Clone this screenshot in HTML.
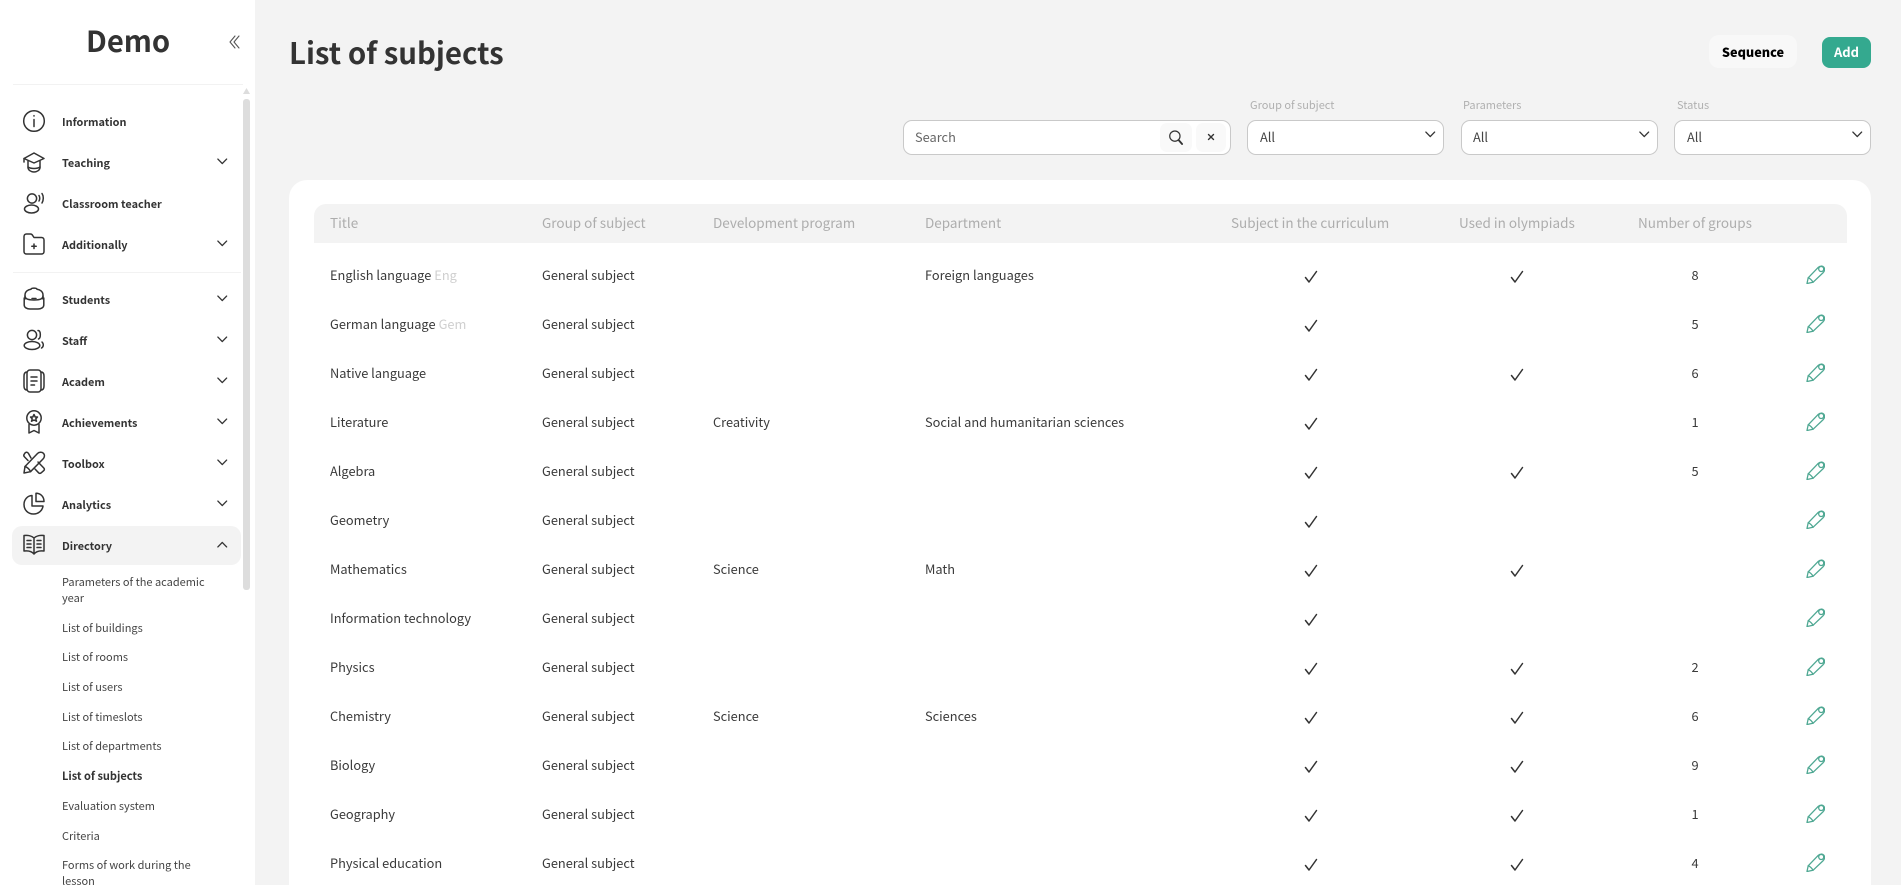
<!DOCTYPE html>
<html lang="en"><head><meta charset="utf-8"><title>List of subjects</title>
<style>
html,body{margin:0;padding:0;width:1901px;height:885px;overflow:hidden;background:#f3f3f3}
body{position:relative;font-family:"Noto Sans CJK JP","Liberation Sans",sans-serif;color:#333}
.t{position:absolute;white-space:nowrap;line-height:20px;height:20px}
.box{position:absolute;box-sizing:border-box}
svg{position:absolute;fill:none;stroke:#333;stroke-width:1.5;stroke-linecap:round;stroke-linejoin:round;overflow:visible}
.nav{font-size:10.9px;font-weight:700;left:62px;color:#333}
.sub{font-size:11px;left:62px;color:#444}
.lab{font-size:11px;color:#b0b0b0}
.sel{background:#fff;border:1px solid #c9c9c9;border-radius:9px;top:120px;height:35px}
.val{font-size:12.8px;top:127px;color:#444}
.h{font-size:13.5px;top:212px;color:#adadad}
.r{position:absolute;left:0;width:1901px;height:20px}
.r .t{top:0;font-size:12.8px;color:#3a3a3a}
.a{left:330px}.b{left:542px}.c{left:713px}.d{left:925px}.n{left:1675px;width:40px;text-align:center}
.k1{left:1304px;top:5px;width:14px;height:14px}
.k2{left:1510px;top:5px;width:14px;height:14px}
.r svg.p{left:1806px;top:0;width:19px;height:19px;stroke:#4fa893;stroke-width:1.3}
.g{color:#cfcfcf;margin-left:3px}
.ch{width:10.5px;height:7px}
</style></head><body>
<svg width="0" height="0" style="position:absolute"><defs>
<symbol id="ck" viewBox="0 0 14 14"><path d="M1.5 7.5L5 12L12.5 1.5"/></symbol>
<symbol id="pn" viewBox="0 0 19 19"><path d="M1 18.5L2.2 12.8L12.3 2.3C14 .7 16.6 .7 17.8 2.2C19 3.6 18.8 6 17.2 7.6L7 17.3Z"/><path d="M2.2 12.8C4 13.4 6.2 15.4 7 17.3"/><circle cx="15.2" cy="4" r="2.5"/></symbol>
<symbol id="dn" viewBox="0 0 12 8"><path d="M1 1.2L6 6.4L11 1.2"/></symbol>
</defs></svg>

<div class="box" style="left:0;top:0;width:255px;height:885px;background:#fff"></div>
<div class="t" style="left:86px;top:20px;height:40px;line-height:40px;font-size:29.2px;font-weight:700;color:#333">Demo</div>
<svg style="left:229px;top:35px;width:11px;height:14px;stroke:#555;stroke-width:1.1" viewBox="0 0 11 14"><path d="M6 1L1 7L6 13M10 1L5 7L10 13"/></svg>
<div class="box" style="left:13px;top:84px;width:230px;height:1px;background:#f2f2f2"></div>
<div class="box" style="left:13px;top:272px;width:228px;height:1px;background:#f2f2f2"></div>
<svg style="left:243px;top:88px;width:7px;height:6px;stroke:none;fill:#ddd" viewBox="0 0 7 6"><path d="M3.5 0L7 6H0Z"/></svg>
<div class="box" style="left:243px;top:99px;width:7px;height:491px;background:#ddd;border-radius:3px"></div>
<div class="box" style="left:12px;top:526px;width:229px;height:39px;background:#f3f3f3;border-radius:10px"></div>

<svg style="left:23px;top:110px;width:22px;height:22px" viewBox="0 0 22 22"><circle cx="11" cy="11" r="10.3"/><path d="M11 9.5V16.5M11 5.6V6"/></svg>
<div class="t nav" style="top:112px">Information</div>
<svg style="left:23px;top:152px;width:22px;height:21px" viewBox="0 0 22 21"><path d="M11 1L21 6.5L11 11L1 6.5Z"/><path d="M1 6.5V10M5 9V15.5C5 18 8 20 11 20C14 20 17 18 17 15.5V9"/><path d="M5 15C8 17 14 17 17 15"/></svg>
<div class="t nav" style="top:153px">Teaching</div>
<svg class="ch" style="left:217px;top:158px"><use href="#dn"/></svg>
<svg style="left:24px;top:192px;width:21px;height:22px" viewBox="0 0 21 22"><circle cx="8" cy="6.5" r="4.6"/><ellipse cx="7.5" cy="17" rx="7" ry="4"/><path d="M15 3.5C16 5 16 7.5 15 9M18 1.5C19.7 4 19.7 8 18 11"/></svg>
<div class="t nav" style="top:194px">Classroom teacher</div>
<svg style="left:23px;top:233px;width:22px;height:22px" viewBox="0 0 22 22"><path d="M1 3.5C1 2 2 1 3.5 1H7.5C9 1 9.5 2 10 3L11 4.5H18.5C20 4.5 21 5.5 21 7V18.5C21 20 20 21 18.5 21H3.5C2 21 1 20 1 18.5Z"/><path d="M11 11V15.5M8.8 13.2H13.2"/></svg>
<div class="t nav" style="top:235px">Additionally</div>
<svg class="ch" style="left:217px;top:240px"><use href="#dn"/></svg>

<svg style="left:23px;top:287px;width:22px;height:23px" viewBox="0 0 22 23"><path d="M2 12V8C2 4.5 5 2.5 8 2.2C8.5 0.8 13.5 0.8 14 2.2C17 2.5 20 4.5 20 8V12"/><path d="M2 9C2 12 6 13 11 13C16 13 20 12 20 9"/><path d="M1.2 11V18C1.2 20.5 4 22 7 22H15C18 22 20.8 20.5 20.8 18V11"/><path d="M9 11.5H13"/></svg>
<div class="t nav" style="top:290px">Students</div>
<svg class="ch" style="left:217px;top:295px"><use href="#dn"/></svg>
<svg style="left:23px;top:329px;width:22px;height:22px" viewBox="0 0 22 22"><circle cx="9" cy="6" r="4.6"/><ellipse cx="9" cy="16.5" rx="7.8" ry="4"/><path d="M15 1.5C18 1.5 18 9 15.5 10M19 13C21 15 20.5 18 18.5 19"/></svg>
<div class="t nav" style="top:331px">Staff</div>
<svg class="ch" style="left:217px;top:336px"><use href="#dn"/></svg>
<svg style="left:23px;top:369px;width:22px;height:24px" viewBox="0 0 22 24"><rect x="4" y="1" width="14" height="22" rx="3"/><path d="M4 3C1.5 3 1 5 1 7V17C1 19 1.5 21 4 21M18 3C20.5 3 21 5 21 7V17C21 19 20.5 21 18 21"/><path d="M8 8H14M8 12H14M8 16H11.5"/></svg>
<div class="t nav" style="top:372px">Academ</div>
<svg class="ch" style="left:217px;top:377px"><use href="#dn"/></svg>
<svg style="left:25px;top:410px;width:18px;height:24px" viewBox="0 0 18 24"><circle cx="9" cy="8" r="7.2"/><path d="M9 4.5L10.2 7H12.5L10.8 8.8L11.5 11.2L9 10L6.5 11.2L7.2 8.8L5.5 7H7.8Z"/><path d="M4 14.5V23L9 20.5L14 23V14.5"/></svg>
<div class="t nav" style="top:413px">Achievements</div>
<svg class="ch" style="left:217px;top:418px"><use href="#dn"/></svg>
<svg style="left:23px;top:451px;width:22px;height:23px" viewBox="0 0 22 23"><path d="M1 22L2 15.5L14.5 2.5C16 1 18.8.8 20.3 2.2C22 3.8 21.7 6.3 20 8L7.5 20.7Z"/><path d="M2 15.5C4 16 6.8 18.5 7.5 20.7"/><path d="M8 7L5.5 2.5C4.5 1 3 1 2.2 1.8L1.2 3.2C.6 4 .8 5.2 1.6 6L5 9.5M15 11L20.8 17C21.6 17.8 21.6 18.8 20.8 19.6L18.2 21.8C17.4 22.5 16.3 22.5 15.5 21.7L12 18"/></svg>
<div class="t nav" style="top:454px">Toolbox</div>
<svg class="ch" style="left:217px;top:459px"><use href="#dn"/></svg>
<svg style="left:23px;top:492px;width:22px;height:23px" viewBox="0 0 22 23"><path d="M9 3.5C4.5 3.7 1 7.5 1 12.5C1 18 5 22 10.5 22C15.5 22 19.5 18.5 20 14H9Z"/><path d="M13 1.2C17.5 1.2 21 4.5 21 9.5H13Z"/></svg>
<div class="t nav" style="top:495px">Analytics</div>
<svg class="ch" style="left:217px;top:500px"><use href="#dn"/></svg>
<svg style="left:23px;top:534px;width:22px;height:21px" viewBox="0 0 22 21"><path d="M11 4C9 2 5 1 1 1.5V17C5 16.5 9 17.5 11 20C13 17.5 17 16.5 21 17V1.5C17 1 13 2 11 4V20"/><path d="M4 6.5H8M4 10H8M4 13.5H8M14 6.5H18M14 10H18M14 13.5H18"/></svg>
<div class="t nav" style="top:536px">Directory</div>
<svg class="ch" style="left:217px;top:541px;transform:scaleY(-1)"><use href="#dn"/></svg>

<div class="t sub" style="top:572px">Parameters of the academic</div>
<div class="t sub" style="top:588px">year</div>
<div class="t sub" style="top:618px">List of buildings</div>
<div class="t sub" style="top:647px">List of rooms</div>
<div class="t sub" style="top:677px">List of users</div>
<div class="t sub" style="top:707px">List of timeslots</div>
<div class="t sub" style="top:736px">List of departments</div>
<div class="t sub" style="top:766px;font-weight:700;color:#333">List of subjects</div>
<div class="t sub" style="top:796px">Evaluation system</div>
<div class="t sub" style="top:826px">Criteria</div>
<div class="t sub" style="top:855px">Forms of work during the</div>
<div class="t sub" style="top:871px">lesson</div>

<div class="t" style="left:289px;top:32px;height:40px;line-height:40px;font-size:29.4px;font-weight:700;color:#333">List of subjects</div>
<div class="box" style="left:1709px;top:35px;width:88px;height:33px;background:#f8f8f8;border-radius:10px"></div>
<div class="t" style="left:1709px;top:42px;width:88px;text-align:center;font-size:12.7px;font-weight:900;color:#000">Sequence</div>
<div class="box" style="left:1822px;top:37px;width:49px;height:31px;background:#34a98f;border-radius:8px"></div>
<div class="t" style="left:1822px;top:42px;width:49px;text-align:center;font-size:13px;font-weight:700;color:#fff">Add</div>

<div class="t lab" style="left:1250px;top:95px">Group of subject</div>
<div class="t lab" style="left:1463px;top:95px">Parameters</div>
<div class="t lab" style="left:1677px;top:95px">Status</div>

<div class="box sel" style="left:903px;width:328px"></div>
<div class="t val" style="left:915px;color:#666">Search</div>
<div class="box" style="left:1160px;top:123px;width:32px;height:29px;background:#f9f9f9;border-radius:7px"></div>
<div class="box" style="left:1196px;top:123px;width:30px;height:29px;background:#f9f9f9;border-radius:7px"></div>
<svg style="left:1169px;top:130px;width:14px;height:15px;stroke-width:1.3" viewBox="0 0 15 16"><circle cx="6.3" cy="6.5" r="5.5"/><path d="M10.5 11L14 15" stroke-width="2"/></svg>
<svg style="left:1208px;top:134px;width:6px;height:6px;stroke-width:1.4" viewBox="0 0 6 6"><path d="M.5 .5L5.5 5.5M5.5 .5L.5 5.5"/></svg>

<div class="box sel" style="left:1247px;width:197px"></div>
<div class="t val" style="left:1260px">All</div>
<svg class="ch" style="left:1425px;top:131px"><use href="#dn"/></svg>
<div class="box sel" style="left:1461px;width:197px"></div>
<div class="t val" style="left:1473px">All</div>
<svg class="ch" style="left:1639px;top:131px"><use href="#dn"/></svg>
<div class="box sel" style="left:1674px;width:197px"></div>
<div class="t val" style="left:1687px">All</div>
<svg class="ch" style="left:1852px;top:131px"><use href="#dn"/></svg>

<div class="box" style="left:289px;top:180px;width:1582px;height:705px;background:#fff;border-radius:18px 18px 0 0"></div>
<div class="box" style="left:314px;top:204px;width:1533px;height:39px;background:#f3f3f3;border-radius:12px 12px 0 0"></div>
<div class="t h" style="left:330px">Title</div>
<div class="t h" style="left:542px">Group of subject</div>
<div class="t h" style="left:713px">Development program</div>
<div class="t h" style="left:925px">Department</div>
<div class="t h" style="left:1231px">Subject in the curriculum</div>
<div class="t h" style="left:1459px">Used in olympiads</div>
<div class="t h" style="left:1638px">Number of groups</div>

<div class="r" style="top:265px"><div class="t a">English language<span class="g">Eng</span></div><div class="t b">General subject</div><div class="t d">Foreign languages</div><svg class="k1"><use href="#ck"/></svg><svg class="k2"><use href="#ck"/></svg><div class="t n">8</div><svg class="p"><use href="#pn"/></svg></div>
<div class="r" style="top:314px"><div class="t a">German language<span class="g">Gem</span></div><div class="t b">General subject</div><svg class="k1"><use href="#ck"/></svg><div class="t n">5</div><svg class="p"><use href="#pn"/></svg></div>
<div class="r" style="top:363px"><div class="t a">Native language</div><div class="t b">General subject</div><svg class="k1"><use href="#ck"/></svg><svg class="k2"><use href="#ck"/></svg><div class="t n">6</div><svg class="p"><use href="#pn"/></svg></div>
<div class="r" style="top:412px"><div class="t a">Literature</div><div class="t b">General subject</div><div class="t c">Creativity</div><div class="t d">Social and humanitarian sciences</div><svg class="k1"><use href="#ck"/></svg><div class="t n">1</div><svg class="p"><use href="#pn"/></svg></div>
<div class="r" style="top:461px"><div class="t a">Algebra</div><div class="t b">General subject</div><svg class="k1"><use href="#ck"/></svg><svg class="k2"><use href="#ck"/></svg><div class="t n">5</div><svg class="p"><use href="#pn"/></svg></div>
<div class="r" style="top:510px"><div class="t a">Geometry</div><div class="t b">General subject</div><svg class="k1"><use href="#ck"/></svg><svg class="p"><use href="#pn"/></svg></div>
<div class="r" style="top:559px"><div class="t a">Mathematics</div><div class="t b">General subject</div><div class="t c">Science</div><div class="t d">Math</div><svg class="k1"><use href="#ck"/></svg><svg class="k2"><use href="#ck"/></svg><svg class="p"><use href="#pn"/></svg></div>
<div class="r" style="top:608px"><div class="t a">Information technology</div><div class="t b">General subject</div><svg class="k1"><use href="#ck"/></svg><svg class="p"><use href="#pn"/></svg></div>
<div class="r" style="top:657px"><div class="t a">Physics</div><div class="t b">General subject</div><svg class="k1"><use href="#ck"/></svg><svg class="k2"><use href="#ck"/></svg><div class="t n">2</div><svg class="p"><use href="#pn"/></svg></div>
<div class="r" style="top:706px"><div class="t a">Chemistry</div><div class="t b">General subject</div><div class="t c">Science</div><div class="t d">Sciences</div><svg class="k1"><use href="#ck"/></svg><svg class="k2"><use href="#ck"/></svg><div class="t n">6</div><svg class="p"><use href="#pn"/></svg></div>
<div class="r" style="top:755px"><div class="t a">Biology</div><div class="t b">General subject</div><svg class="k1"><use href="#ck"/></svg><svg class="k2"><use href="#ck"/></svg><div class="t n">9</div><svg class="p"><use href="#pn"/></svg></div>
<div class="r" style="top:804px"><div class="t a">Geography</div><div class="t b">General subject</div><svg class="k1"><use href="#ck"/></svg><svg class="k2"><use href="#ck"/></svg><div class="t n">1</div><svg class="p"><use href="#pn"/></svg></div>
<div class="r" style="top:853px"><div class="t a">Physical education</div><div class="t b">General subject</div><svg class="k1"><use href="#ck"/></svg><svg class="k2"><use href="#ck"/></svg><div class="t n">4</div><svg class="p"><use href="#pn"/></svg></div>
</body></html>
